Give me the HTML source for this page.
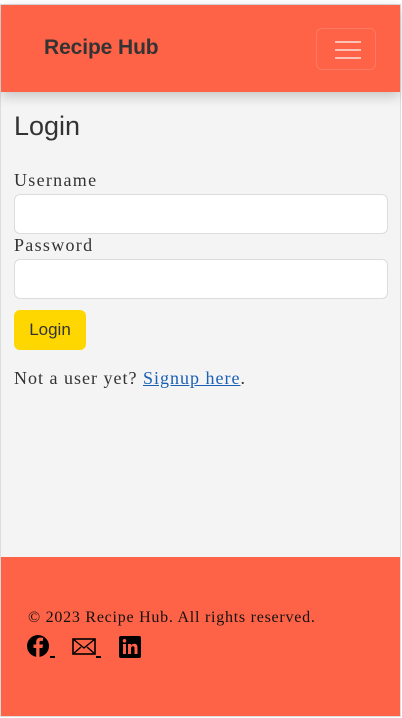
<!DOCTYPE html>
<html><head><meta charset="utf-8"><style>
*{box-sizing:border-box;margin:0;padding:0}
html,body{width:402px;height:718px;overflow:hidden;background:#fff}
.page{position:absolute;left:0;top:4px;width:401px;height:713px;border:1px solid #ddd;background:#f4f4f4}
nav{position:absolute;left:0;top:0;width:399px;height:87px;background:#ff6347;box-shadow:0 4px 12px rgba(0,0,0,.2);z-index:2}
.brand{position:absolute;left:43px;top:31px;font:bold 21px "Liberation Sans",sans-serif;color:#333;letter-spacing:-0.1px}
.tog{position:absolute;left:315px;top:23px;width:60px;height:42px;border:1px solid rgba(255,255,255,.15);border-radius:6px}
.tog i{position:absolute;left:18px;width:26px;height:2px;background:rgba(255,255,255,.6)}
h2{position:absolute;left:13px;top:106px;font:27px "Liberation Sans",sans-serif;color:#333}
.f{font-family:"Liberation Serif",serif;color:#333;font-size:18px}
label{position:absolute;left:13px;letter-spacing:1.3px}
.in{position:absolute;left:13px;width:374px;height:40px;background:#fff;border:1px solid #dcdcdc;border-radius:6px}
.btn{position:absolute;left:13px;top:305px;width:72px;height:40px;background:#ffd700;border-radius:6px;font:17px "Liberation Sans",sans-serif;color:#333;text-align:center;line-height:39px}
.p{position:absolute;left:13px;top:363px;letter-spacing:1px}
.p a{color:#1a5fb4;text-decoration:underline}
footer{position:absolute;left:0;top:552px;width:399px;height:159px;background:#ff6347}
.copy{position:absolute;left:27px;top:52px;font-size:16px;color:#111;letter-spacing:0.75px}
.ic{position:absolute;top:78px}
</style></head><body><div class="page">
<nav><div class="brand">Recipe Hub</div><div class="tog"><i style="top:12px"></i><i style="top:20px"></i><i style="top:28px"></i></div></nav>
<h2>Login</h2>
<label class="f" style="top:165px">Username</label>
<div class="in" style="top:189px"></div>
<label class="f" style="top:230px">Password</label>
<div class="in" style="top:254px"></div>
<div class="btn">Login</div>
<div class="p f">Not a user yet? <a>Signup here</a>.</div>
<footer>
<div class="copy f">© 2023 Recipe Hub. All rights reserved.</div>
<svg class="ic" style="left:26px" width="30" height="24" viewBox="0 0 30 24"><circle cx="11" cy="11" r="11" fill="#000"/><path d="M12.5 22V13h3l.5-3.5h-3.5V7.5c0-1 .4-1.6 1.7-1.6H16V2.8c-.5-.1-1.5-.2-2.5-.2-2.6 0-4.3 1.6-4.3 4.4v2.5H6.5V13h2.7v9z" fill="#ff6347"/><rect x="23" y="21" width="5" height="2" fill="#000"/></svg>
<svg class="ic" style="left:71px" width="32" height="24" viewBox="0 0 32 24"><rect x="1" y="4" width="22" height="15" fill="none" stroke="#000" stroke-width="1.6"/><path d="M1 4l11 9 11-9M1 19l8-7M23 19l-8-7" fill="none" stroke="#000" stroke-width="1.4"/><rect x="24" y="21" width="5" height="2" fill="#000"/></svg>
<svg class="ic" style="left:117px" width="24" height="24" viewBox="0 0 24 24"><rect x="1" y="1" width="22" height="22" rx="2" fill="#000"/><rect x="5" y="9" width="3" height="10" fill="#ff6347"/><circle cx="6.5" cy="5.8" r="1.8" fill="#ff6347"/><path d="M10 9h3v1.5c.7-1.1 1.8-1.8 3.3-1.8 2.5 0 3.2 1.6 3.2 4V19h-3v-5.5c0-1.3-.3-2.2-1.6-2.2s-1.9 1-1.9 2.3V19h-3z" fill="#ff6347"/></svg>
</footer>
</div></body></html>
